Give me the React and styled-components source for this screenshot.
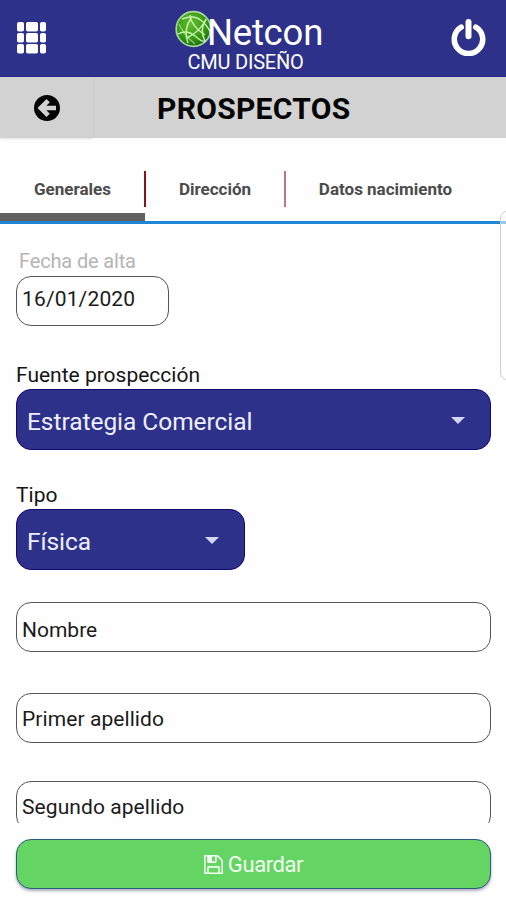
import React from 'react';
import styled, { createGlobalStyle, ThemeProvider } from 'styled-components';

const theme = {
  colors: {
    primary: '#2d3189',
    border: '#12086f',
    bar: '#d2d2d2',
    save: '#64d463',
    line: '#1f86d6',
  },
};

const GlobalStyle = createGlobalStyle`
  * { box-sizing: border-box; }
  body {
    margin: 0;
    background: #fefefe;
    font-family: Roboto, 'Liberation Sans', sans-serif;
  }
  button { font-family: inherit; }
`;

const Screen = styled.div`
  position: relative;
  display: flex;
  flex-direction: column;
  width: 506px;
  height: 900px;
  overflow: hidden;
  background: #fefefe;
  color: #111;
`;

const Header = styled.header`
  display: flex;
  justify-content: space-between;
  height: 77px;
  flex: none;
  padding: 0 20px 0 17px;
  background: ${(props) => props.theme.colors.primary};
  border-bottom: 1px solid #282b8b;
  color: white;
`;

const IconButton = styled.button`
  display: flex;
  padding: ${(props) => props.$top}px 0 0;
  border: 0;
  background: transparent;
  color: white;
`;

const Brand = styled.div`
  display: flex;
  flex-direction: column;
  align-items: center;
  padding: 10px 0 0 1px;
`;

const Logo = styled.div`
  display: flex;
  height: 40px;
`;

const LogoText = styled.span`
  margin-left: -5px;
  padding-top: 4px;
  font-size: 36.5px;
  line-height: 38px;
  letter-spacing: -0.2px;
`;

const Company = styled.span`
  padding-right: 7px;
  font-size: 20px;
  line-height: 24px;
  letter-spacing: -0.2px;
`;

const TitleBar = styled.div`
  display: flex;
  height: 61px;
  flex: none;
  background: ${(props) => props.theme.colors.bar};
`;

const BackButton = styled.button`
  display: flex;
  align-items: center;
  justify-content: center;
  width: 93px;
  padding: 0;
  border: 0;
  background: transparent;
  box-shadow: 0 1px 2px rgba(0, 0, 0, 0.12);
`;

const Title = styled.h1`
  flex: 1;
  margin: 0;
  padding-left: 64px;
  font-size: 30px;
  font-weight: 700;
  line-height: 63px;
  letter-spacing: 0.3px;
  color: #050505;
`;

const Tabs = styled.nav`
  display: flex;
  height: 86px;
  flex: none;
  border-bottom: 3px solid ${(props) => props.theme.colors.line};
`;

const Tab = styled.button`
  display: flex;
  align-items: center;
  justify-content: center;
  width: ${(props) => props.$width}px;
  padding: 26px 0 0;
  border: 0;
  border-bottom: 8px solid ${(props) => (props.$active ? '#616161' : 'transparent')};
  background: transparent;
  color: #4c4c4c;
  font-size: 17px;
  font-weight: 700;
`;

const Divider = styled.span`
  width: ${(props) => (props.$soft ? 1.5 : 2)}px;
  height: 36px;
  margin: 33px 0 0 ${(props) => (props.$soft ? 0 : -1)}px;
  background: ${(props) => (props.$soft ? '#b5797e' : '#841519')};
`;

const Form = styled.main`
  height: 599px;
  flex: none;
  padding: 24px 15px 0 16px;
  overflow: hidden;
`;

const Label = styled.label`
  display: block;
  height: ${(props) => (props.$muted ? 28 : 27)}px;
  padding-left: ${(props) => (props.$muted ? 3 : 0)}px;
  color: ${(props) => (props.$muted ? '#b5b5b5' : '#151515')};
  font-size: ${(props) => (props.$muted ? 20 : 21)}px;
  line-height: 26px;
  letter-spacing: ${(props) => props.$spacing || 0}px;
`;

const Field = styled.div`
  width: ${(props) => (props.$width ? `${props.$width}px` : '100%')};
  height: 50px;
  margin-bottom: ${(props) => props.$gap}px;
  padding: ${(props) => props.$top || 0}px 0 0 5px;
  border: 1px solid #555;
  border-radius: 15px;
  color: #1b1b1b;
  font-size: 21px;
  line-height: ${(props) => props.$line || 46}px;
  letter-spacing: ${(props) => props.$spacing || 0}px;
`;

const Select = styled.div`
  display: flex;
  align-items: center;
  justify-content: space-between;
  width: ${(props) => (props.$width ? `${props.$width}px` : '100%')};
  height: 61px;
  margin-bottom: ${(props) => props.$gap}px;
  padding: 4px 25px 0 10px;
  border: 1px solid ${(props) => props.theme.colors.border};
  border-radius: 15px;
  background: ${(props) => props.theme.colors.primary};
  color: #eeefff;
  font-size: 24.5px;
  letter-spacing: -0.05px;
`;

const Caret = styled.span`
  border: 7px solid transparent;
  border-top-color: #d3d6f2;
  border-bottom: 0;
  margin-bottom: 2px;
`;

const Footer = styled.footer`
  padding: 16px 15px 0 16px;
`;

const SaveButton = styled.button`
  display: flex;
  align-items: center;
  justify-content: center;
  gap: 5px;
  width: 100%;
  height: 50px;
  padding: 1px 0 0;
  border: 1.5px solid #2b5c80;
  border-radius: 15px;
  background: ${(props) => props.theme.colors.save};
  box-shadow: 0 2px 3px rgba(20, 20, 70, 0.35);
  color: #f4fff2;
  font-size: 22px;
  letter-spacing: -0.4px;
`;

// Edge panel handle that sits over the right side of the screen
const EdgeHandle = styled.div`
  position: absolute;
  top: 211px;
  right: -10px;
  width: 16px;
  height: 169px;
  border: 1px solid #d0d0d0;
  border-radius: 7px;
  background: rgba(255, 255, 255, 0.55);
`;

function GridIcon() {
  const columns = [[0, 7], [9, 12], [23, 6]];
  return (
    <svg width="29" height="32" viewBox="0 0 29 32" fill="currentColor">
      {[0, 11, 22].map((y) =>
        columns.map(([x, width]) => (
          <rect key={`${x}-${y}`} x={x} y={y} width={width} height="9.5" rx="1.8" />
        ))
      )}
    </svg>
  );
}

function PowerIcon() {
  return (
    <svg width="35" height="38" viewBox="0 0 35 38" fill="none" stroke="currentColor" strokeLinecap="round">
      <path d="M10.2 9.2A14.2 14.2 0 1 0 24.8 9.2" strokeWidth="5.5" />
      <path d="M17.5 4V18.2" strokeWidth="6" />
    </svg>
  );
}

function GlobeIcon() {
  return (
    <svg width="37" height="38" viewBox="0 0 37 38" fill="none">
      <defs>
        <radialGradient id="globe" cx="42%" cy="35%" r="65%">
          <stop offset="0" stopColor="#65bd32" />
          <stop offset="0.65" stopColor="#369a13" />
          <stop offset="1" stopColor="#1e7011" />
        </radialGradient>
      </defs>
      <circle cx="18.5" cy="19" r="17.3" fill="url(#globe)" stroke="#a6d79c" strokeWidth="1.7" />
      <g stroke="#c8f2ae" strokeWidth="1.4">
        <path d="M7 9Q20 4 28 12T35 24" />
        <path d="M15 5Q16 16 30 25" />
        <path d="M31 9Q24 20 30 31" />
        <path d="M16 8Q8 20 13 33" />
        <path d="M3 24Q12 19 20 26T31 31" />
        <path d="M12 28Q24 22 31 10" />
        <path d="M4 14Q9 25 20 34" opacity="0.6" />
      </g>
    </svg>
  );
}

function BackIcon() {
  return (
    <svg width="26" height="26" viewBox="0 0 26 26">
      <circle cx="13" cy="13" r="13" fill="#050505" />
      <path
        d="M3.5 13L12.5 4L15.8 7.3L12.4 10.7H22V15.3H12.4L15.8 18.7L12.5 22Z"
        fill="#d2d2d2"
      />
    </svg>
  );
}

function SaveIcon() {
  return (
    <svg width="19" height="19" viewBox="0 128 1536 1536" fill="currentColor">
      <path d="M384 1536h768v-384h-768v384zM1280 1536h128v-896q0-14-10-38.5t-20-34.5l-281-281q-10-10-34-20t-39-10v416q0 40-28 68t-68 28h-576q-40 0-68-28t-28-68v-416h-128v1280h128v-416q0-40 28-68t68-28h832q40 0 68 28t28 68v416zM896 608v-320q0-13-9.5-22.5t-22.5-9.5h-192q-13 0-22.5 9.5t-9.5 22.5v320q0 13 9.5 22.5t22.5 9.5h192q13 0 22.5-9.5t9.5-22.5zM1536 640v928q0 40-28 68t-68 28h-1344q-40 0-68-28t-28-68v-1344q0-40 28-68t68-28h928q40 0 88 20t76 48l280 280q28 28 48 76t20 88z" />
    </svg>
  );
}

function App() {
  return (
    <ThemeProvider theme={theme}>
      <GlobalStyle />
      <Screen>
        <Header>
          <IconButton $top={22} aria-label="Menú"><GridIcon /></IconButton>
          <Brand>
            <Logo>
              <GlobeIcon />
              <LogoText>Netcon</LogoText>
            </Logo>
            <Company>CMU DISEÑO</Company>
          </Brand>
          <IconButton $top={18} aria-label="Salir"><PowerIcon /></IconButton>
        </Header>

        <TitleBar>
          <BackButton aria-label="Regresar"><BackIcon /></BackButton>
          <Title>PROSPECTOS</Title>
        </TitleBar>

        <Tabs>
          <Tab $width={145} $active>Generales</Tab>
          <Divider />
          <Tab $width={138}>Dirección</Tab>
          <Divider $soft />
          <Tab $width={200}>Datos nacimiento</Tab>
        </Tabs>

        <Form>
          <Label $muted $spacing={-0.15}>Fecha de alta</Label>
          <Field $width={153} $gap={36} $line={45} $spacing={0.15}>16/01/2020</Field>

          <Label>Fuente prospección</Label>
          <Select $gap={32}>Estrategia Comercial<Caret /></Select>

          <Label>Tipo</Label>
          <Select $width={229} $gap={32}>Física<Caret /></Select>

          {/* Datos personales */}
          <Field $gap={41} $top={4}>Nombre</Field>
          <Field $gap={38} $top={2} $spacing={0.08}>Primer apellido</Field>
          <Field $gap={0} $top={2} $spacing={0.08}>Segundo apellido</Field>
        </Form>

        <Footer>
          <SaveButton><SaveIcon />Guardar</SaveButton>
        </Footer>
        <EdgeHandle />
      </Screen>
    </ThemeProvider>
  );
}

export default App;
